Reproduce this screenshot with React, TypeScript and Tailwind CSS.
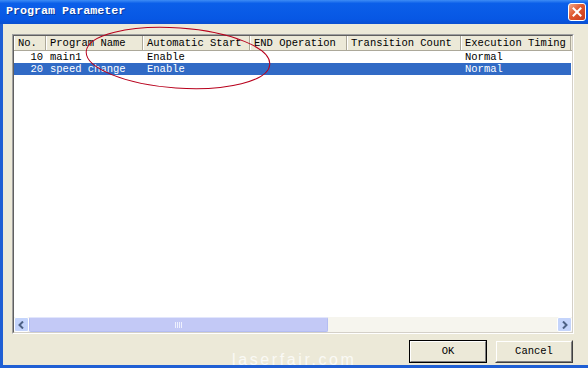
import React from 'react';

type Col = { label: string; w: number };

const COLUMNS: Col[] = [
  { label: 'No.', w: 32 },
  { label: 'Program Name', w: 97 },
  { label: 'Automatic Start', w: 107 },
  { label: 'END Operation', w: 97 },
  { label: 'Transition Count', w: 114 },
  { label: 'Execution Timing', w: 110 },
];

const ROWS = [
  ['10', 'main1', 'Enable', '', '', 'Normal'],
  ['20', 'speed change', 'Enable', '', '', 'Normal'],
];

const mono = { fontFamily: '"Liberation Mono", "DejaVu Sans Mono", monospace' };

function CloseButton() {
  return (
    <div className="flex h-[18px] w-[18px] items-center justify-center rounded-[3px] border border-white bg-[linear-gradient(135deg,#f0a88a_0%,#e0582e_45%,#c8381a_100%)]">
      <svg width="10" height="10" viewBox="0 0 10 10">
        <path d="M1.5 1.5 L8.5 8.5 M8.5 1.5 L1.5 8.5" stroke="white" strokeWidth="2" strokeLinecap="square" />
      </svg>
    </div>
  );
}

function Chevron({ dir }: { dir: 'left' | 'right' }) {
  return (
    <svg width="7" height="8" viewBox="0 0 7 8">
      <path
        d={dir === 'left' ? 'M5 0.5 L1.5 4 L5 7.5' : 'M2 0.5 L5.5 4 L2 7.5'}
        stroke="#4d6185"
        strokeWidth="2"
        fill="none"
      />
    </svg>
  );
}

function Button({ label, isDefault }: { label: string; isDefault?: boolean }) {
  return (
    <div
      className={
        'h-[23px] w-[78px] ' +
        (isDefault ? 'border border-black' : 'border border-[#ece9d8] border-r-[#404040] border-b-[#404040]')
      }
    >
      <div className="flex h-full w-full items-center justify-center border border-white border-r-[#808080] border-b-[#808080] bg-[#ece9d8] text-[10.5px] text-black" style={mono}>
        {label}
      </div>
    </div>
  );
}

export default function App() {
  return (
    <div className="relative flex h-[368px] w-[588px] flex-col overflow-hidden bg-[#ece9d8]" style={mono}>
      {/* title bar */}
      <div className="flex h-[24px] shrink-0 items-center justify-between bg-[linear-gradient(180deg,#3d8cf5_0%,#0b5fe9_14%,#0757e4_80%,#0a4fd0_100%)] pl-[6px] pr-[2px]">
        <span className="text-[11.7px] font-bold text-white" style={{ textShadow: '1px 1px 0 #0a3a9a' }}>
          Program Parameter
        </span>
        <CloseButton />
      </div>

      <div className="flex flex-1 flex-col border-b-[3px] border-l-[3px] border-[#1f5fd4] pl-[9px] pr-[14px] pt-[10px] pb-[2px]">
        {/* list view */}
        <div className="h-[300px] border border-[#a0a0a0] border-b-white border-r-white">
          <div className="flex h-full flex-col border border-[#606060] border-b-[#d4d0c8] border-r-[#d4d0c8] bg-white">
            <div className="flex h-[15px] shrink-0 border-b border-[#aca899] bg-[#ece9d8]">
              {COLUMNS.map((c) => (
                <div
                  key={c.label}
                  className="flex items-center border-r border-[#aca899] pl-[4px] text-[10.5px] leading-none text-black shadow-[inset_1px_0_0_#ffffff]"
                  style={{ width: c.w }}
                >
                  {c.label}
                </div>
              ))}
            </div>
            <div className="flex-1">
              {ROWS.map((r, i) => (
                <div
                  key={i}
                  className={'flex h-[12px] w-[557px] ' + (i === 1 ? 'bg-[#316ac5] text-white' : 'text-black')}
                >
                  {r.map((v, j) => (
                    <div
                      key={j}
                      className={
                        'flex items-center text-[10.5px] leading-none ' +
                        (j === 0 ? 'justify-end pr-[3px]' : 'pl-[4px]')
                      }
                      style={{ width: COLUMNS[j].w }}
                    >
                      {v}
                    </div>
                  ))}
                </div>
              ))}
            </div>
            {/* horizontal scrollbar */}
            <div className="flex h-[15px] shrink-0 bg-[#f6f5ee]">
              <div className="flex w-[15px] items-center justify-center rounded-[2px] border border-white bg-[#c4d4fb]">
                <Chevron dir="left" />
              </div>
              <div className="flex flex-1">
                <div className="flex w-[299px] items-center justify-center rounded-[2px] border border-[#b4bdf2] border-t-[#e2e6fc] bg-[#c3c9f6]">
                  <div className="flex gap-[1px]">
                    <div className="h-[6px] w-[1px] bg-[#eef0fd]" />
                    <div className="h-[6px] w-[1px] bg-[#eef0fd]" />
                    <div className="h-[6px] w-[1px] bg-[#eef0fd]" />
                    <div className="h-[6px] w-[1px] bg-[#eef0fd]" />
                  </div>
                </div>
              </div>
              <div className="flex w-[15px] items-center justify-center rounded-[2px] border border-white bg-[#c4d4fb]">
                <Chevron dir="right" />
              </div>
            </div>
          </div>
        </div>

        <div className="mt-[6px] flex justify-end gap-[8px] pr-[1px]">
          <Button label="OK" isDefault />
          <Button label="Cancel" />
        </div>
      </div>

      {/* watermark */}
      <div
        className="pointer-events-none absolute left-[232px] top-[348px] text-[16px] tracking-[2.6px] text-white/75"
        style={{ fontFamily: '"Liberation Sans", Arial, sans-serif' }}
      >
        laserfair.com
      </div>

      {/* red annotation ellipse */}
      <svg className="pointer-events-none absolute left-0 top-0" width="588" height="368">
        <ellipse cx="178" cy="58" rx="92" ry="30" transform="rotate(4 178 58)" fill="none" stroke="#b8001c" strokeWidth="1" />
      </svg>
    </div>
  );
}
